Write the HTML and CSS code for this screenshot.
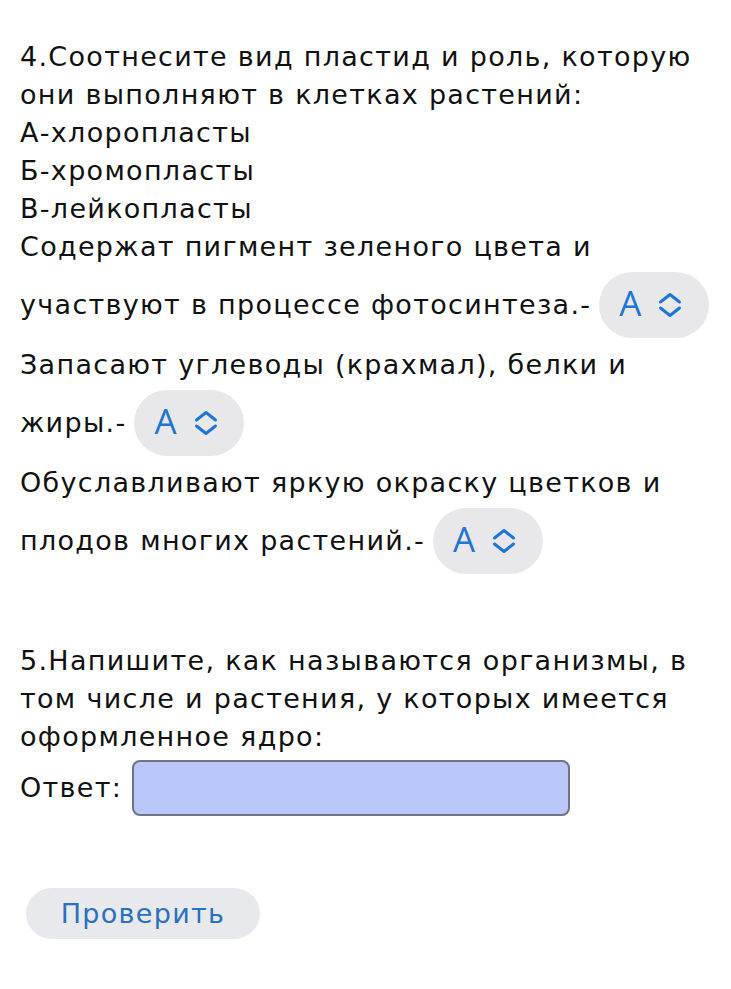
FILE: index.html
```html
<!DOCTYPE html>
<html lang="ru">
<head>
<meta charset="utf-8">
<link rel="stylesheet" href="styles.css">
</head>
<body>
<div class="page">
  <section class="task">
    <p class="line">4.Соотнесите вид пластид и роль, которую<br>они выполняют в клетках растений:</p>
    <p class="line">А-хлоропласты</p>
    <p class="line">Б-хромопласты</p>
    <p class="line">В-лейкопласты</p>
    <p class="line">Содержат пигмент зеленого цвета и<br>участвуют в процессе фотосинтеза.-<span class="sel"><span class="sel-val">А</span><svg class="chev" viewBox="0 0 24 26" width="24" height="26"><path d="M2.5 10 L12 2.5 L21.5 10 M2.5 16 L12 23.5 L21.5 16" fill="none" stroke="currentColor" stroke-width="3" stroke-linecap="round" stroke-linejoin="round"/></svg></span></p>
    <p class="line">Запасают углеводы (крахмал), белки и<br>жиры.-<span class="sel"><span class="sel-val">А</span><svg class="chev" viewBox="0 0 24 26" width="24" height="26"><path d="M2.5 10 L12 2.5 L21.5 10 M2.5 16 L12 23.5 L21.5 16" fill="none" stroke="currentColor" stroke-width="3" stroke-linecap="round" stroke-linejoin="round"/></svg></span></p>
    <p class="line">Обуславливают яркую окраску цветков и<br>плодов многих растений.-<span class="sel"><span class="sel-val">А</span><svg class="chev" viewBox="0 0 24 26" width="24" height="26"><path d="M2.5 10 L12 2.5 L21.5 10 M2.5 16 L12 23.5 L21.5 16" fill="none" stroke="currentColor" stroke-width="3" stroke-linecap="round" stroke-linejoin="round"/></svg></span></p>
  </section>
  <section class="task task2">
    <p class="line">5.Напишите, как называются организмы, в<br>том числе и растения, у которых имеется<br>оформленное ядро:</p>
    <div class="answer">
      <span class="answer-label">Ответ:</span>
      <span class="answer-input"></span>
    </div>
  </section>
  <div class="actions">
    <span class="btn">Проверить</span>
  </div>
</div>
</body>
</html>
```

FILE: styles.css
```css
html, body {
  margin: 0;
  padding: 0;
  background: #ffffff;
}
.page {
  width: 731px;
  padding: 38px 0 0 20px;
  box-sizing: border-box;
  font-family: "DejaVu Sans", "Noto Sans", sans-serif;
  font-size: 27px;
  letter-spacing: 1.3px;
  line-height: 38px;
  color: #111111;
}
.line {
  margin: 0;
  white-space: nowrap;
}
.sel {
  display: inline-flex;
  align-items: center;
  gap: 17px;
  height: 66px;
  width: 110px;
  padding: 0 0 0 20px;
  margin: 6px 0 8px 8px;
  border-radius: 33px;
  background: #e8e8eb;
  vertical-align: middle;
  color: #1f74d6;
  box-sizing: border-box;
  letter-spacing: 0;
}
.sel-val {
  font-family: "Open Sans", sans-serif;
  font-size: 35px;
  line-height: 1;
  margin-top: -6px;
}
.chev {
  display: block;
}
.task2 {
  margin-top: 60px;
}
.answer {
  display: flex;
  align-items: center;
  gap: 10px;
  margin-top: 4px;
}
.answer-label {
  line-height: 38px;
}
.answer-input {
  display: block;
  width: 438px;
  height: 56px;
  box-sizing: border-box;
  border: 2px solid #6f7480;
  border-radius: 8px;
  background: #b8c7f8;
}
.actions {
  margin-top: 72px;
  padding-left: 6px;
}
.btn {
  display: inline-flex;
  align-items: center;
  justify-content: center;
  width: 234px;
  height: 51px;
  border-radius: 26px;
  background: #e8e9ec;
  color: #2a6fc0;
  font-size: 27px;
}
```
